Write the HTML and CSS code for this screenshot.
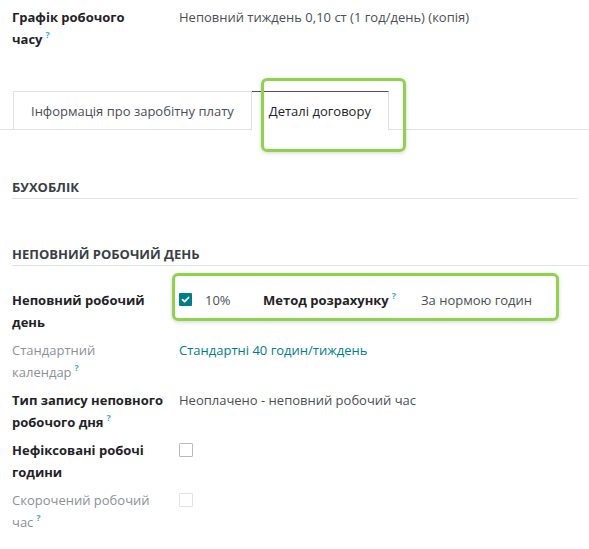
FILE: index.html
```html
<!DOCTYPE html>
<html lang="uk">
<head>
<meta charset="utf-8">
<link rel="stylesheet" href="styles.css">
</head>
<body>
<div class="sheet">
  <div class="row first">
    <div class="label strong">Графік робочого<br>часу<sup class="tip">?</sup></div>
    <div class="value">Неповний тиждень 0,10 ст (1 год/день) (копія)</div>
  </div>

  <div class="tabs">
    <div class="tab">Інформація про заробітну плату</div>
    <div class="tab active">Деталі договору<span class="hl hl-tab"></span></div>
  </div>

  <div class="section short">БУХОБЛІК</div>
  <div class="section second">НЕПОВНИЙ РОБОЧИЙ ДЕНЬ</div>

  <div class="row">
    <div class="label strong">Неповний робочий<br>день</div>
    <div class="value inline">
      <span class="hl hl-row"></span>
      <span class="check checked"><svg viewBox="0 0 13 13" width="13" height="13"><path d="M3.5 6.7 L5.6 8.7 L9.6 4.5" fill="none" stroke="#fff" stroke-width="1.8" stroke-linecap="round" stroke-linejoin="round"/></svg></span>
      <span class="pct">10%</span>
      <span class="sublabel strong">Метод розрахунку<sup class="tip">?</sup></span>
      <span>За нормою годин</span>
    </div>
  </div>

  <div class="row">
    <div class="label muted">Стандартний<br>календар<sup class="tip">?</sup></div>
    <div class="value link">Стандартні 40 годин/тиждень</div>
  </div>

  <div class="row">
    <div class="label strong">Тип запису неповного<br>робочого дня<sup class="tip">?</sup></div>
    <div class="value">Неоплачено - неповний робочий час</div>
  </div>

  <div class="row">
    <div class="label strong">Нефіксовані робочі<br>години</div>
    <div class="value"><span class="check"></span></div>
  </div>

  <div class="row">
    <div class="label muted">Скорочений робочий<br>час<sup class="tip">?</sup></div>
    <div class="value"><span class="check disabled"></span></div>
  </div>
</div>
</body>
</html>
```

FILE: styles.css
```css
html, body {
  margin: 0;
  padding: 0;
  background: #fff;
}
body {
  font-family: "Open Sans", "Noto Sans", sans-serif;
  font-size: 13px;
  line-height: 22px;
  color: #4a4f55;
}
.sheet {
  padding: 6px 0 0 12px;
}
.row {
  display: grid;
  grid-template-columns: 167px 1fr;
  margin-bottom: 6px;
  min-height: 44px;
}
.label {
  width: 164px;
  color: #1f2328;
}
.strong {
  font-weight: 700;
  color: #1f2328;
}
.muted {
  color: #8c9196;
  font-weight: 400;
}
.tip {
  font-size: 9px;
  line-height: 0;
  color: #3fa7cf;
  margin-left: 3px;
  font-weight: 700;
  vertical-align: 6px;
}
.value {
  position: relative;
  color: #4a4f55;
}
.value.link {
  color: #017e84;
}
.inline {
  display: flex;
  align-items: flex-start;
  height: 22px;
}
.check {
  display: inline-block;
  box-sizing: border-box;
  width: 14px;
  height: 14px;
  border: 1.5px solid #b8bbbe;
  border-radius: 1px;
  margin-top: 4px;
  vertical-align: top;
}
.check.checked {
  width: 13px;
  height: 13px;
  border: none;
  background: #017e84;
  margin-right: 13px;
}
.check.checked svg {
  display: block;
}
.check.disabled {
  border-color: #e1e3e5;
}
.pct {
  width: 58px;
}
.sublabel {
  width: 158px;
}
.tabs {
  display: flex;
  margin: 41px 0 0 -12px;
  padding-left: 13px;
  border-bottom: 1px solid #dee2e6;
}
.tab {
  position: relative;
  padding: 8px 17px 7px 17px;
  border: 1px solid #dee2e6;
  border-bottom: none;
  color: #4a4f55;
}
.tab.active {
  padding-left: 17px;
  border-left: none;
  border-top-color: #5f4b5a;
  background: #fff;
  margin-bottom: -1px;
  padding-bottom: 8px;
  color: #1f2328;
}
.hl {
  position: absolute;
  box-sizing: border-box;
  border: 3px solid #92d14f;
  border-radius: 6px;
  box-shadow: 0 1px 4px rgba(0, 0, 0, 0.18), inset 0 0 3px rgba(0, 0, 0, 0.08);
  pointer-events: none;
}
.hl-tab {
  left: 9px;
  top: -14px;
  width: 145px;
  height: 74px;
}
.hl-row {
  left: -7px;
  top: -16px;
  width: 387px;
  height: 48px;
}
.section {
  font-weight: 700;
  color: #3a3f46;
  font-size: 13px;
  line-height: 21px;
  border-bottom: 1px solid #dee2e6;
}
.section.short {
  margin-top: 47px;
  margin-right: 12px;
}
.section.second {
  margin-top: 45px;
  margin-bottom: 23px;
}
```
